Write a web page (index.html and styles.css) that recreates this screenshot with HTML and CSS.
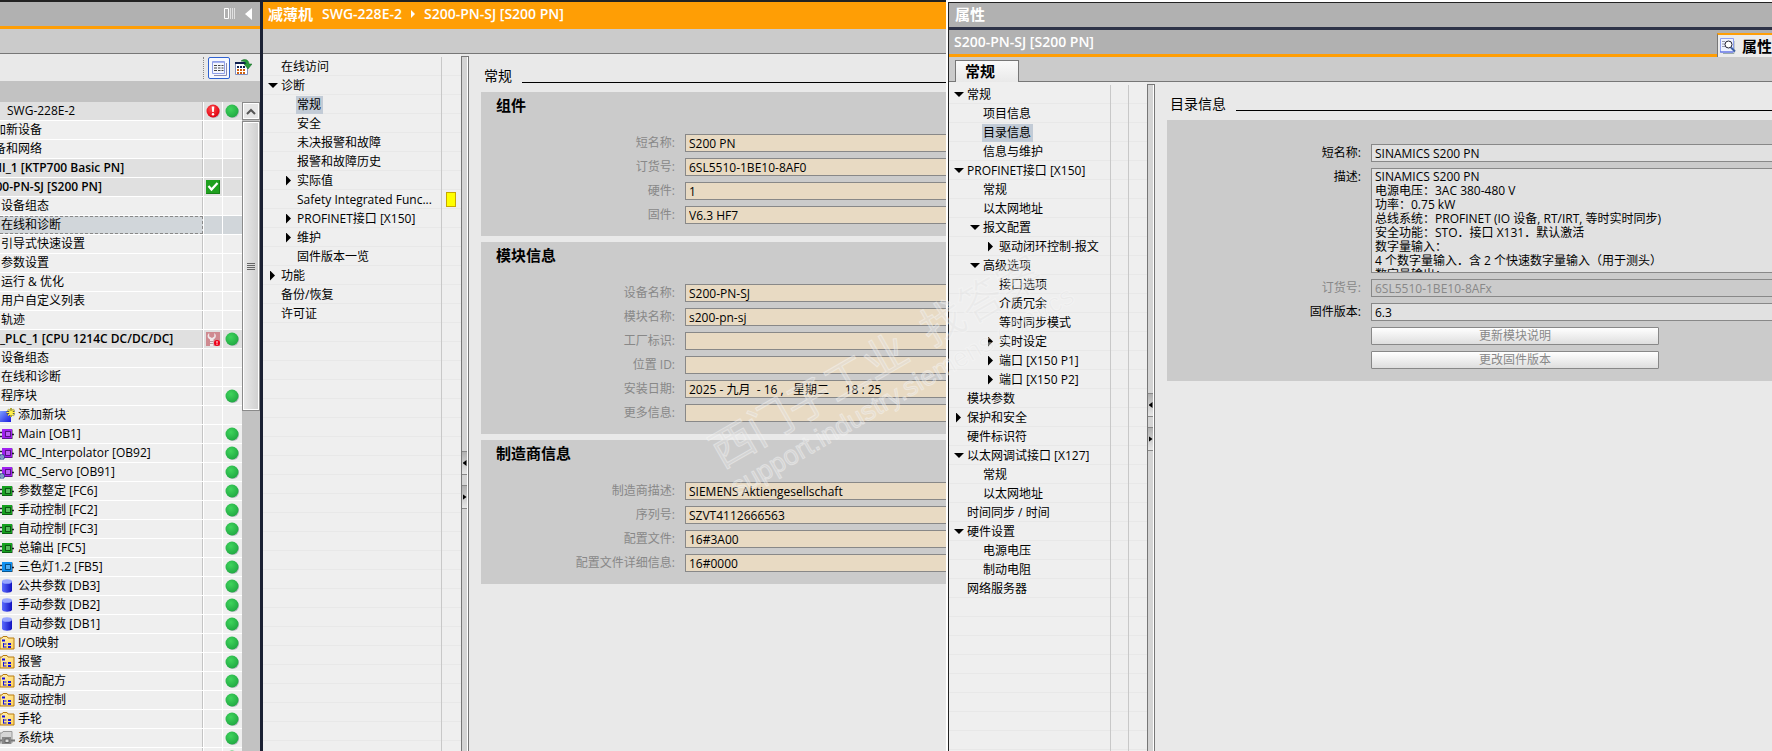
FILE: index.html
```
<!DOCTYPE html>
<html lang="zh-CN">
<head>
<meta charset="UTF-8">
<meta name="viewport" content="width=device-width, initial-scale=1">
<title>S200-PN-SJ [S200 PN]</title>
<link rel="stylesheet" href="styles.css">
</head>
<body>

<!-- shared icons -->
<svg class="sprite" aria-hidden="true">
  <defs>
    <radialGradient id="greenFill" cx="40%" cy="35%" r="65%">
      <stop offset="0" stop-color="#3fd45c"/><stop offset="1" stop-color="#22aa44"/>
    </radialGradient>
    <radialGradient id="redFill" cx="40%" cy="35%" r="65%">
      <stop offset="0" stop-color="#ff5050"/><stop offset="1" stop-color="#e00010"/>
    </radialGradient>
    <linearGradient id="dbFill"><stop offset="0" stop-color="#5a6cff"/><stop offset="1" stop-color="#1212c0"/></linearGradient>
    <linearGradient id="newFill" x2="1" y2="1"><stop offset="0" stop-color="#7b9dff"/><stop offset="1" stop-color="#1a1ae0"/></linearGradient>
    <linearGradient id="folderFill" x2="1" y2="1"><stop offset="0" stop-color="#fff2b8"/><stop offset="1" stop-color="#ffd25a"/></linearGradient>
  </defs>
  <symbol id="ok" viewBox="0 0 14 14"><circle cx="8" cy="8" r="6" fill="#b9b9c4"/><circle cx="7" cy="7" r="6.5" fill="url(#greenFill)"/></symbol>
  <symbol id="error" viewBox="0 0 14 14"><circle cx="8" cy="8" r="6" fill="#b9b9c4"/><circle cx="7" cy="7" r="6.5" fill="url(#redFill)"/><path d="M5.7 2.5h2.6l-.5 5.5H6.2z" fill="#fff"/><circle cx="7" cy="10.3" r="1.2" fill="#fff"/></symbol>
  <symbol id="check" viewBox="0 0 14 14"><path d="M0 0h14v14H0z" fill="#1fa01f"/><path d="M.5 13.5h13V.5" fill="none" stroke="#158015"/><path d="M2.5 6l3 3.5L11.5 3" fill="none" stroke="#fff" stroke-width="2.2"/></symbol>
  <symbol id="service" viewBox="0 0 14 14"><path d="M0 0h14v14H0z" fill="#cf8a90"/><path d="M3.2 1C1 2.5 1 6 4 7.500V14h3.500V7.500c3-1.500 3-5 .8-6.500v3.500L6 6 3.200 4.500z" fill="#f0e8ea"/><path d="M4 9.500h3.500M4 11.500h3.500" stroke="#b99ca0"/><circle cx="11" cy="11" r="3" fill="#f00018"/><path d="M11 9v2.500M11 12.200v.8" stroke="#fff"/></symbol>
  <symbol id="block" viewBox="0 0 15 14"><path d="M0 5.500h3M0 9.500h3M11 7.500h3" stroke="#223" stroke-width="1.500"/><path d="M2 2h10v10H2z" fill="currentColor"/><path d="M2 11.500h10.500V2.500" fill="none" stroke="#0006"/><path d="M5.500 4.500h5v5h-5z" fill="currentColor" stroke="#0007"/><path d="M6 5h4v4H6z" fill="#fff4"/></symbol>
  <symbol id="lock" viewBox="0 0 6 6"><path d="M0 1h4v4H0z" fill="#e8f2ff" stroke="#17458a"/><path d="M1 3h2" stroke="#17458a"/></symbol>
  <symbol id="db" viewBox="0 0 15 14"><path d="M2 2v9.500c0 3 10 3 10 0V2z" fill="url(#dbFill)"/><ellipse cx="7" cy="2.500" rx="5" ry="2.300" fill="#97a6ff"/></symbol>
  <symbol id="folder" viewBox="0 0 15 14"><path d="M0 2h2l1-1.500h4L8 2h6v11H0z" fill="url(#folderFill)" stroke="#b87a10"/><path d="M2 4.500h3" stroke="#1010e0" stroke-width="2"/><path d="M3.500 7v4.500M3.500 8h3M3.500 11h3" fill="none" stroke="#1010e0"/><path d="M8 8h3M8 11h3" stroke="#1010e0" stroke-width="2"/></symbol>
  <symbol id="sysfolder" viewBox="0 0 15 14"><path d="M0 2h2l1-1.500h9V12H0z" fill="#d6d6d6" stroke="#999"/><path d="M2 6h9v7H2z" fill="#888"/><path d="M11 9.500h4M0 9.500h2" stroke="#777" stroke-width="2"/><path d="M5 8h4v3.500H5z" fill="#ddd" stroke="#666"/></symbol>
  <symbol id="newblock" viewBox="0 0 15 14"><path d="M0 3h11v11H0z" fill="url(#newFill)"/><path d="M11 0v9M6.500 4.500h8.500M8 1.500l6 6M14 1.500l-6 6" stroke="#3a3a20" stroke-width="2"/><path d="M11 0v9M6.500 4.500h8.500M8 1.500l6 6M14 1.500l-6 6" stroke="#fff04a" stroke-width="1.200"/></symbol>
</svg>

<div class="app">

  <!-- project tree -->
  <aside class="project">
    <header class="project-head">
      <svg width="12" height="12" viewBox="0 0 12 12"><path d="M.5.500h4v10h-4z" fill="none" stroke="#fff"/><path d="M6.500 0v11M8.500 0v11M10.500 0v11" stroke="#e0e0e0"/></svg>
      <svg width="7" height="12" viewBox="0 0 7 12"><path d="M7 0v12L0 6z" fill="#fff"/></svg>
    </header>
    <div class="strip"></div>
    <div class="toolbar">
      <button class="tool active" aria-label="详细视图"><svg width="16" height="16" viewBox="0 0 16 16"><path d="M3 15.500h12.500V3" fill="none" stroke="#8a8ab0"/><path d="M1.500 1.500h12v12h-12z" fill="#f4f6ff" stroke="#8f9fe8"/><path d="M2 2.500h11" stroke="#a8b4f0"/><path d="M3 5.500h3M7 5.500h2.500M10.500 5.500h2M3 8h3M7 8h2.500M10.500 8h2M3 10.500h3M7 10.500h2.500M10.500 10.500h2" stroke="#444"/></svg></button>
      <button class="tool" aria-label="导出"><svg width="17" height="17" viewBox="0 0 17 17"><path d="M.5 3.500h12v12H.500z" fill="#fff" stroke="#8090c0"/><path d="M0 4h12" stroke="#102050" stroke-width="2"/><path d="M2 8h2M5 8h2M8 8h2" stroke="#102050" stroke-width="2"/><path d="M2 11h2M5 11h2M8 11h2M2 14h2M5 14h2M8 14h2" stroke="#d06010" stroke-width="2"/><path d="M6 2c4-3 8-1 8 3h3l-4 5-4-5h2c0-2-2-3-5-3z" fill="#2a9a3a" stroke="#116622" stroke-width=".5"/></svg></button>
    </div>
    <div class="grid-head"></div>
    <div class="project-body">
      <ul class="project-tree">
        <li class="device"><span class="name root">SWG-228E-2</span><i><svg><use href="#error"/></svg></i><i><svg><use href="#ok"/></svg></i></li>
        <li><span class="name l1">添加新设备</span><i></i><i></i></li>
        <li><span class="name l1">设备和网络</span><i></i><i></i></li>
        <li class="device"><span class="name l1 strong">HMI_1 [KTP700 Basic PN]</span><i></i><i></i></li>
        <li class="device"><span class="name l1 strong">S200-PN-SJ [S200 PN]</span><i><svg><use href="#check"/></svg></i><i></i></li>
        <li><span class="name l2">设备组态</span><i></i><i></i></li>
        <li class="selected"><span class="name l2">在线和诊断</span><i></i><i></i></li>
        <li><span class="name l2">引导式快速设置</span><i></i><i></i></li>
        <li><span class="name l2">参数设置</span><i></i><i></i></li>
        <li><span class="name l2">运行 &amp; 优化</span><i></i><i></i></li>
        <li><span class="name l2">用户自定义列表</span><i></i><i></i></li>
        <li><span class="name l2">轨迹</span><i></i><i></i></li>
        <li class="device"><span class="name strong">_PLC_1 [CPU 1214C DC/DC/DC]</span><i><svg><use href="#service"/></svg></i><i><svg><use href="#ok"/></svg></i></li>
        <li><span class="name l2">设备组态</span><i></i><i></i></li>
        <li><span class="name l2">在线和诊断</span><i></i><i></i></li>
        <li><span class="name l2">程序块</span><i></i><i><svg><use href="#ok"/></svg></i></li>
        <li><span class="name l3"><svg><use href="#newblock"/></svg>添加新块</span><i></i><i></i></li>
        <li><span class="name l3"><svg class="ob"><use href="#block"/></svg>Main [OB1]</span><i></i><i><svg><use href="#ok"/></svg></i></li>
        <li><span class="name l3"><svg class="ob"><use href="#block"/><use href="#lock" y="8" width="6" height="6"/></svg>MC_Interpolator [OB92]</span><i></i><i><svg><use href="#ok"/></svg></i></li>
        <li><span class="name l3"><svg class="ob"><use href="#block"/><use href="#lock" y="8" width="6" height="6"/></svg>MC_Servo [OB91]</span><i></i><i><svg><use href="#ok"/></svg></i></li>
        <li><span class="name l3"><svg class="fc"><use href="#block"/></svg>参数整定 [FC6]</span><i></i><i><svg><use href="#ok"/></svg></i></li>
        <li><span class="name l3"><svg class="fc"><use href="#block"/></svg>手动控制 [FC2]</span><i></i><i><svg><use href="#ok"/></svg></i></li>
        <li><span class="name l3"><svg class="fc"><use href="#block"/></svg>自动控制 [FC3]</span><i></i><i><svg><use href="#ok"/></svg></i></li>
        <li><span class="name l3"><svg class="fc"><use href="#block"/></svg>总输出 [FC5]</span><i></i><i><svg><use href="#ok"/></svg></i></li>
        <li><span class="name l3"><svg class="fb"><use href="#block"/></svg>三色灯1.2 [FB5]</span><i></i><i><svg><use href="#ok"/></svg></i></li>
        <li><span class="name l3"><svg><use href="#db"/></svg>公共参数 [DB3]</span><i></i><i><svg><use href="#ok"/></svg></i></li>
        <li><span class="name l3"><svg><use href="#db"/></svg>手动参数 [DB2]</span><i></i><i><svg><use href="#ok"/></svg></i></li>
        <li><span class="name l3"><svg><use href="#db"/></svg>自动参数 [DB1]</span><i></i><i><svg><use href="#ok"/></svg></i></li>
        <li><span class="name l3"><svg><use href="#folder"/></svg>I/O映射</span><i></i><i><svg><use href="#ok"/></svg></i></li>
        <li><span class="name l3"><svg><use href="#folder"/></svg>报警</span><i></i><i><svg><use href="#ok"/></svg></i></li>
        <li><span class="name l3"><svg><use href="#folder"/></svg>活动配方</span><i></i><i><svg><use href="#ok"/></svg></i></li>
        <li><span class="name l3"><svg><use href="#folder"/></svg>驱动控制</span><i></i><i><svg><use href="#ok"/></svg></i></li>
        <li><span class="name l3"><svg><use href="#folder"/></svg>手轮</span><i></i><i><svg><use href="#ok"/></svg></i></li>
        <li><span class="name l3"><svg><use href="#sysfolder"/></svg>系统块</span><i></i><i><svg><use href="#ok"/></svg></i></li>
        <li><span class="name l3"></span><i></i><i><svg><use href="#ok"/></svg></i></li>
      </ul>
      <div class="scrollbar">
        <button class="scroll-up" aria-label="向上滚动"><svg width="10" height="7" viewBox="0 0 10 7"><path d="M1 6l4-4 4 4" fill="none" stroke="#555" stroke-width="2"/></svg></button>
        <div class="thumb"></div>
      </div>
    </div>
  </aside>

  <!-- online & diagnostics editor -->
  <main class="editor">
    <header class="editor-head">
      <span>减薄机</span><span>SWG-228E-2</span>
      <svg width="4" height="8" viewBox="0 0 4 8"><path d="M0 0l4 4-4 4z" fill="#fff"/></svg>
      <span>S200-PN-SJ [S200 PN]</span>
    </header>
    <div class="strip"></div>
    <div class="work">
      <nav class="nav">
        <ul>
          <li><a href="#">在线访问</a></li>
          <li class="open"><a href="#">诊断</a></li>
          <li class="n2"><a href="#" class="current">常规</a></li>
          <li class="n2"><a href="#">安全</a></li>
          <li class="n2"><a href="#">未决报警和故障</a></li>
          <li class="n2"><a href="#">报警和故障历史</a></li>
          <li class="n2 closed"><a href="#">实际值</a></li>
          <li class="n2"><a href="#">Safety Integrated Func...</a><b class="flag"></b></li>
          <li class="n2 closed"><a href="#">PROFINET接口 [X150]</a></li>
          <li class="n2 closed"><a href="#">维护</a></li>
          <li class="n2"><a href="#">固件版本一览</a></li>
          <li class="closed"><a href="#">功能</a></li>
          <li><a href="#">备份/恢复</a></li>
          <li><a href="#">许可证</a></li>
        </ul>
      </nav>
      <div class="splitter"><button class="left" aria-label="折叠"></button><button class="right" aria-label="展开"></button></div>
      <div class="content">
        <h2>常规</h2>
        <section class="panel">
          <h3>组件</h3>
          <div class="field"><label for="shortName">短名称:</label><input id="shortName" value="S200 PN" readonly></div>
          <div class="field"><label for="orderNo">订货号:</label><input id="orderNo" value="6SL5510-1BE10-8AF0" readonly></div>
          <div class="field"><label for="hw">硬件:</label><input id="hw" value="1" readonly></div>
          <div class="field"><label for="fw">固件:</label><input id="fw" value="V6.3 HF7" readonly></div>
        </section>
        <section class="panel">
          <h3>模块信息</h3>
          <div class="field"><label for="devName">设备名称:</label><input id="devName" value="S200-PN-SJ" readonly></div>
          <div class="field"><label for="modName">模块名称:</label><input id="modName" value="s200-pn-sj" readonly></div>
          <div class="field"><label for="plant">工厂标识:</label><input id="plant" readonly></div>
          <div class="field"><label for="location">位置 ID:</label><input id="location" readonly></div>
          <div class="field"><label for="installed">安装日期:</label><input id="installed" value="2025 - 九月  - 16 ,   星期二     18 : 25" readonly></div>
          <div class="field"><label for="more">更多信息:</label><input id="more" readonly></div>
        </section>
        <section class="panel">
          <h3>制造商信息</h3>
          <div class="field"><label for="vendor">制造商描述:</label><input id="vendor" value="SIEMENS Aktiengesellschaft" readonly></div>
          <div class="field"><label for="serial">序列号:</label><input id="serial" value="SZVT4112666563" readonly></div>
          <div class="field"><label for="profile">配置文件:</label><input id="profile" value="16#3A00" readonly></div>
          <div class="field"><label for="profileInfo">配置文件详细信息:</label><input id="profileInfo" value="16#0000" readonly></div>
        </section>
      </div>
    </div>
  </main>

  <!-- properties -->
  <section class="properties">
    <header class="props-title">属性</header>
    <div class="props-object">
      <span>S200-PN-SJ [S200 PN]</span>
      <button class="props-tab"><svg width="16" height="16" viewBox="0 0 16 16"><path d="M3 15.500h11V3" fill="none" stroke="#9aa"/><path d="M.5.500h13v13.500H.500z" fill="#eef2ff" stroke="#8fa0f0"/><path d="M0 14h13" stroke="#5060e0"/><path d="M2 3.500h3M2 6h3M2 8.500h3" stroke="#99a"/><circle cx="8.500" cy="6.500" r="3.500" fill="#fff" stroke="#223"/><path d="M11 9.500l4 4" stroke="#4060a0" stroke-width="2"/></svg>属性</button>
    </div>
    <div class="tabs"><button>常规</button></div>
    <div class="work">
      <nav class="nav two">
        <ul>
          <li class="open"><a href="#">常规</a></li>
          <li class="n2"><a href="#">项目信息</a></li>
          <li class="n2"><a href="#" class="current">目录信息</a></li>
          <li class="n2"><a href="#">信息与维护</a></li>
          <li class="open"><a href="#">PROFINET接口 [X150]</a></li>
          <li class="n2"><a href="#">常规</a></li>
          <li class="n2"><a href="#">以太网地址</a></li>
          <li class="n2 open"><a href="#">报文配置</a></li>
          <li class="n3 closed"><a href="#">驱动闭环控制-报文</a></li>
          <li class="n2 open"><a href="#">高级选项</a></li>
          <li class="n3"><a href="#">接口选项</a></li>
          <li class="n3"><a href="#">介质冗余</a></li>
          <li class="n3"><a href="#">等时同步模式</a></li>
          <li class="n3 closed"><a href="#">实时设定</a></li>
          <li class="n3 closed"><a href="#">端口 [X150 P1]</a></li>
          <li class="n3 closed"><a href="#">端口 [X150 P2]</a></li>
          <li><a href="#">模块参数</a></li>
          <li class="closed"><a href="#">保护和安全</a></li>
          <li><a href="#">硬件标识符</a></li>
          <li class="open"><a href="#">以太网调试接口 [X127]</a></li>
          <li class="n2"><a href="#">常规</a></li>
          <li class="n2"><a href="#">以太网地址</a></li>
          <li><a href="#">时间同步 / 时间</a></li>
          <li class="open"><a href="#">硬件设置</a></li>
          <li class="n2"><a href="#">电源电压</a></li>
          <li class="n2"><a href="#">制动电阻</a></li>
          <li><a href="#">网络服务器</a></li>
        </ul>
      </nav>
      <div class="splitter"><button class="left" aria-label="折叠"></button><button class="right" aria-label="展开"></button></div>
      <div class="content">
        <h2>目录信息</h2>
        <section class="panel catalog">
          <div class="field"><label for="catName">短名称:</label><input id="catName" value="SINAMICS S200 PN" readonly></div>
          <div class="field"><label for="catDesc">描述:</label><textarea id="catDesc" readonly>SINAMICS S200 PN
电源电压：3AC 380-480 V
功率：0.75 kW
总线系统：PROFINET (IO 设备, RT/IRT, 等时实时同步)
安全功能：STO．接口 X131．默认激活
数字量输入：
4 个数字量输入．含 2 个快速数字量输入（用于测头）
数字量输出：</textarea></div>
          <div class="field off"><label for="catOrder">订货号:</label><input id="catOrder" value="6SL5510-1BE10-8AFx" disabled></div>
          <div class="field"><label for="catFw">固件版本:</label><input id="catFw" value="6.3" readonly></div>
          <button class="action" disabled>更新模块说明</button>
          <button class="action" disabled>更改固件版本</button>
        </section>
      </div>
    </div>
  </section>

  <div class="watermark" aria-hidden="true">
    <p class="wm-name">西门子工业  找答案</p>
    <p class="wm-url">support.industry.siemens.com/cs</p>
  </div>
</div>

</body>
</html>
```

FILE: styles.css
```
* {
  box-sizing: border-box;
}
body {
  margin: 0;
  font-family: "Open Sans", "Noto Sans CJK SC", sans-serif;
  font-size: 12px;
  color: #000;
  background: #fff;
}
ul, h2, h3, p {
  margin: 0;
  padding: 0;
  list-style: none;
}
a {
  color: inherit;
  text-decoration: none;
}
button, input, textarea {
  font: inherit;
  color: inherit;
  margin: 0;
  padding: 0;
  border: 0;
  border-radius: 0;
}
.sprite {
  position: absolute;
  width: 0;
  height: 0;
}
.app {
  position: relative;
  display: grid;
  grid-template-columns: 263px 683fr 826fr;
  height: 100vh;
  overflow: hidden;
}
.strip {
  flex: none;
  height: 25px;
  background: #cbcbcb;
  border-bottom: 1px solid #777;
}

/* project tree */
.project {
  display: flex;
  flex-direction: column;
  min-width: 0;
  overflow: hidden;
  border-right: 3px solid #1b2133;
}
.project-head {
  flex: none;
  display: flex;
  align-items: center;
  justify-content: flex-end;
  gap: 9px;
  height: 29px;
  padding-right: 8px;
  background: #b1b1b1;
  border-top: 2px solid #222;
  border-bottom: 3px solid #ff9e05;
}
.toolbar {
  flex: none;
  display: flex;
  align-items: center;
  justify-content: flex-end;
  gap: 2px;
  height: 27px;
  padding-right: 6px;
  background: #e9e9e9;
}
.toolbar::before {
  content: "";
  height: 22px;
  margin-right: 2px;
  border-left: 1px dotted #888;
}
.tool {
  display: flex;
  align-items: center;
  justify-content: center;
  width: 22px;
  height: 22px;
  background: none;
}
.tool.active {
  background: #f6f8ff;
  border: 1px solid #2f62d0;
  border-radius: 2px;
}
.grid-head {
  flex: none;
  height: 21px;
  background: #c2c2c2;
}
.project-body {
  flex: 1;
  display: flex;
  min-height: 0;
}
.project-tree {
  flex: 1;
  min-width: 0;
}
.project-tree li {
  display: grid;
  grid-template-columns: 1fr 19px 20px;
  height: 19px;
  background: #efefef;
  border-bottom: 1px solid #fff;
}
.project-tree li.device {
  background: #e0e0e0;
}
.project-tree li.selected {
  background: #d1d6da;
}
.name {
  display: flex;
  align-items: center;
  min-width: 0;
  border-right: 1px solid #c4c4c4;
  line-height: 18px;
  white-space: nowrap;
}
.selected .name {
  border: 1px dashed #888;
  border-left: 0;
  line-height: 16px;
}
.name.root {
  padding-left: 7px;
}
.name.l1 {
  text-indent: -18px;
}
.name.l2 {
  padding-left: 1px;
}
.name svg {
  flex: none;
  width: 15px;
  height: 14px;
  margin-right: 3px;
}
.strong {
  font-weight: 600;
}
.ob {
  color: #a020f0;
}
.fc {
  color: #16a020;
}
.fb {
  color: #1090f0;
}
.project-tree i {
  display: flex;
  align-items: center;
  padding-left: 2px;
  border-left: 1px solid #fff;
}
.project-tree i svg {
  width: 14px;
  height: 14px;
}
.scrollbar {
  width: 18px;
  background: #c2c2c2;
}
.scroll-up {
  display: flex;
  align-items: center;
  justify-content: center;
  width: 18px;
  height: 18px;
  background: #e6e6e6;
  border: 1px solid #8a8a8a;
  box-shadow: inset 0 0 0 1px #fff;
}
.thumb {
  display: flex;
  align-items: center;
  justify-content: center;
  height: 290px;
  margin-top: 1px;
  background: linear-gradient(90deg, #eaeaea, #cfcfcf);
  border: 1px solid #8a8a8a;
  box-shadow: inset 0 0 0 1px #fff;
}
.thumb::before {
  content: "";
  width: 8px;
  height: 7px;
  background: repeating-linear-gradient(#666 0 1px, transparent 1px 2px);
}

/* editor */
.editor {
  display: flex;
  flex-direction: column;
  min-width: 0;
  overflow: hidden;
}
.editor-head {
  flex: none;
  display: flex;
  align-items: center;
  gap: 9px;
  height: 29px;
  padding: 0 0 3px 5px;
  background: #ff9e05;
  border-top: 2px solid #222;
  color: #fff;
  font-size: 14px;
  font-weight: 600;
  line-height: 20px;
  white-space: nowrap;
}
.editor-head span:first-child {
  font-size: 15px;
  font-weight: 700;
}
.work {
  flex: 1;
  display: flex;
  min-height: 0;
  background: #e9e9e9;
}

/* navigation inside editor and properties */
.nav {
  flex: none;
  display: flex;
  width: 198px;
  padding-top: 3px;
  background: #efefef;
}
.nav ul {
  flex: 1;
  background:
    linear-gradient(#c8c8c8, #c8c8c8) 178px 0 / 1px 100% no-repeat,
    repeating-linear-gradient(transparent 0 18px, #e8e8e8 18px 19px);
}
.nav.two ul {
  background:
    linear-gradient(#c8c8c8, #c8c8c8) 161px 0 / 1px 100% no-repeat,
    linear-gradient(#c8c8c8, #c8c8c8) 179px 0 / 1px 100% no-repeat,
    repeating-linear-gradient(transparent 0 18px, #e8e8e8 18px 19px);
}
.nav li {
  display: flex;
  align-items: center;
  height: 19px;
  padding-left: 5px;
  white-space: nowrap;
}
.nav li::before {
  content: "";
  flex: none;
  width: 10px;
  margin-right: 2px;
}
.nav li.n2 {
  padding-left: 21px;
}
.nav li.n3 {
  padding-left: 37px;
}
.nav li.open::before {
  height: 5px;
  background: #000;
  clip-path: polygon(0 0, 100% 0, 50% 100%);
}
.nav li.closed::before {
  height: 10px;
  background: #000;
  clip-path: polygon(20% 0, 70% 50%, 20% 100%);
}
.nav a {
  padding: 0 2px 0 1px;
  line-height: 18px;
}
.nav a.current {
  background: #c2cbd6;
}
.flag {
  width: 10px;
  height: 15px;
  margin-left: auto;
  margin-right: 5px;
  background: #ff0;
  border: 1px solid #c8a800;
}
.splitter {
  flex: none;
  display: flex;
  flex-direction: column;
  align-items: flex-start;
  justify-content: center;
  gap: 10px;
  width: 8px;
  margin-top: 2px;
  padding-top: 8px;
  background: #d4d4d4;
  border: 1px solid #777;
  border-bottom: 0;
  box-shadow: inset -1px 0 0 #fff;
}
.editor .splitter {
  padding-top: 152px;
}
.splitter button {
  display: flex;
  align-items: center;
  justify-content: center;
  width: 5px;
  height: 24px;
  background: linear-gradient(#b0b0b0, #e6e6e6);
  border-top: 1px solid #888;
  border-bottom: 1px solid #888;
}
.splitter button::before {
  content: "";
  width: 4px;
  height: 6px;
  background: #000;
}
.splitter .left::before {
  clip-path: polygon(100% 0, 100% 100%, 0 50%);
}
.splitter .right::before {
  clip-path: polygon(0 0, 100% 50%, 0 100%);
}

.content {
  flex: 1;
  min-width: 0;
  padding-left: 12px;
}
.content h2 {
  display: flex;
  align-items: flex-end;
  gap: 10px;
  height: 29px;
  margin-bottom: 9px;
  padding-left: 3px;
  font-size: 14px;
  font-weight: 400;
  line-height: 14px;
}
.content h2::after {
  content: "";
  flex: 1;
  border-bottom: 1px solid #000;
}
.panel {
  display: flex;
  flex-direction: column;
  gap: 6px;
  margin-bottom: 6px;
  padding-bottom: 12px;
  background: #cbcbcb;
}
.panel h3 {
  height: 36px;
  padding: 3px 0 0 15px;
  font-size: 15px;
  font-weight: 700;
  line-height: 20px;
}
.field {
  display: flex;
}
.field label {
  flex: none;
  width: 204px;
  padding-right: 10px;
  text-align: right;
  line-height: 18px;
  color: #888;
}
.field input, .field textarea {
  flex: 1;
  min-width: 0;
  height: 18px;
  padding-left: 3px;
  background: #e8dac3;
  border: 1px solid #888;
  border-right: 0;
  outline: 0;
}
.catalog {
  padding-top: 24px;
}
.catalog label {
  color: #000;
}
.catalog input {
  background: #e1e1e1;
}
.catalog textarea {
  height: 105px;
  padding-top: 1px;
  background: #e1e1e1;
  line-height: 14px;
  resize: none;
  overflow: hidden;
}
.catalog .off label {
  color: #888;
}
.catalog .off input {
  background: #cbcbcb;
  color: #888;
}
.action {
  width: 288px;
  height: 18px;
  margin-left: 204px;
  background: linear-gradient(#fff, #dedede);
  border: 1px solid #888;
  border-radius: 1px;
  color: #888;
  line-height: 16px;
}

/* properties */
.properties {
  display: flex;
  flex-direction: column;
  min-width: 0;
  margin: 2px 0 0 2px;
  overflow: hidden;
  border-top: 1px solid #222;
  border-left: 1px solid #222;
}
.props-title {
  flex: none;
  height: 27px;
  padding-left: 6px;
  background: #b1b1b1;
  border-bottom: 3px solid #2e3348;
  color: #fff;
  font-size: 15px;
  font-weight: 600;
  line-height: 23px;
}
.props-object {
  flex: none;
  display: flex;
  align-items: flex-end;
  justify-content: space-between;
  height: 27px;
  padding-left: 5px;
  background: linear-gradient(#b1b1b1 24px, #ff9e05 24px);
  color: #fff;
  font-size: 14px;
  font-weight: 600;
  line-height: 24px;
}
.props-object span {
  align-self: flex-start;
}
.props-tab {
  display: flex;
  align-items: center;
  gap: 6px;
  width: 55px;
  height: 24px;
  padding-left: 2px;
  overflow: hidden;
  background: #ececec;
  border-top: 2px solid #ff9e05;
  border-left: 1px solid #777;
  color: #000;
  font-size: 15px;
  font-weight: 700;
  line-height: 20px;
  white-space: nowrap;
}
.props-tab svg {
  flex: none;
}
.tabs {
  flex: none;
  display: flex;
  align-items: flex-end;
  height: 25px;
  padding-left: 6px;
  background: linear-gradient(#cbcbcb 24px, #777 24px);
}
.tabs button {
  width: 64px;
  height: 22px;
  padding: 0 14px 2px 0;
  background: linear-gradient(#fafafa, #e9e9e9);
  border: 1px solid #777;
  border-bottom: 0;
  font-size: 15px;
  font-weight: 700;
  line-height: 18px;
}

/* watermark runs over both windows */
.watermark {
  position: absolute;
  left: 702px;
  top: 435px;
  transform: rotate(-30deg);
  transform-origin: 0 0;
  color: rgba(228, 228, 228, 0.4);
  -webkit-text-stroke: 1px rgba(255, 255, 255, 0.35);
  pointer-events: none;
}
.watermark p {
  white-space: pre;
}
.wm-name {
  font-size: 44px;
  line-height: 44px;
}
.wm-url {
  font-family: "Liberation Sans", sans-serif;
  font-size: 27px;
  line-height: 36px;
}
```
